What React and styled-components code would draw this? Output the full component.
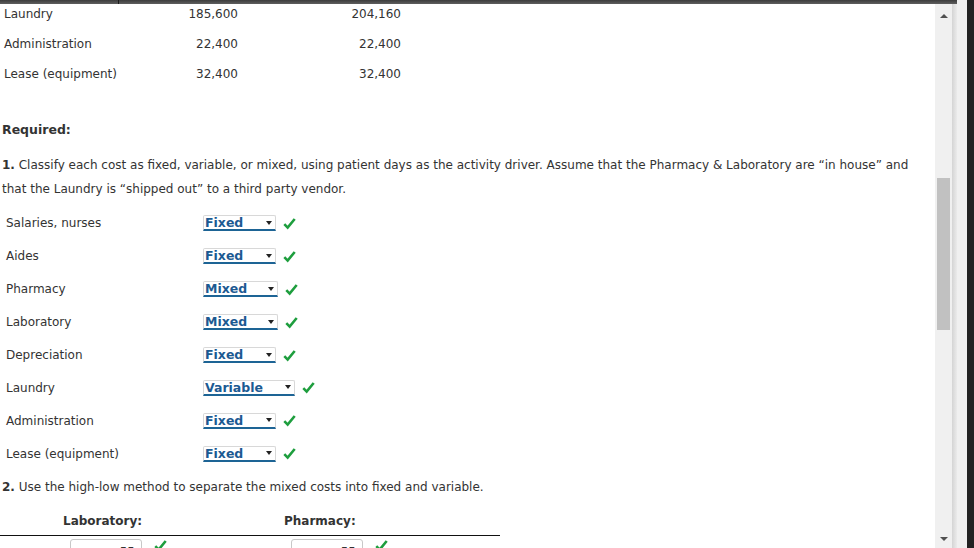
import React from 'react';
import styled, { createGlobalStyle } from 'styled-components';

const GlobalStyle = createGlobalStyle`
  html, body {
    margin: 0;
    padding: 0;
    background: #ffffff;
    overflow: hidden;
  }
  body {
    font-family: "DejaVu Sans", Verdana, sans-serif;
    color: #333333;
  }
`;

const Window = styled.div`
  display: flex;
  width: 974px;
  height: 548px;
  overflow: hidden;
`;

const MainColumn = styled.div`
  display: flex;
  flex-direction: column;
  width: 957px;
  height: 548px;
`;

const TopBand = styled.div`
  height: 4px;
  flex-shrink: 0;
  background: linear-gradient(#3c3c3c, #5e5e5e);
  display: flex;
`;

const BandTick = styled.div`
  margin-left: 118px;
  width: 1px;
  background: #1c1c1c;
`;

const Body = styled.div`
  display: flex;
  flex: 1;
  min-height: 0;
`;

const Content = styled.div`
  width: 935px;
  overflow: hidden;
  font-size: 12px;
`;

const Scrollbar = styled.div`
  width: 17px;
  background: #f0f0f0;
  display: flex;
  flex-direction: column;
  align-items: center;
  justify-content: space-between;
  padding: 10px 0 7px;
  box-sizing: border-box;
  position: relative;
`;

const Thumb = styled.div`
  position: absolute;
  top: 174px;
  left: 2px;
  width: 13px;
  height: 152px;
  background: #c1c1c1;
`;

const Arrow = styled.div`
  width: 0;
  height: 0;
  border-left: 4px solid transparent;
  border-right: 4px solid transparent;
  ${({ down }) => down ? 'border-top: 4px solid #505050;' : 'border-bottom: 4px solid #505050;'}
`;

const Shadow = styled.div`
  width: 5px;
  background: linear-gradient(90deg, #d4d4d4, #ebebeb);
`;

const Gutter = styled.div`
  width: 10px;
  background: #f0f0f0;
`;

const DarkEdge = styled.div`
  width: 7px;
  background: #222222;
`;

const DataTable = styled.div`
  margin-top: -5px;
`;

const DataRow = styled.div`
  display: grid;
  grid-template-columns: 120px 114px 163px;
  height: 30px;
  line-height: 30px;
  padding-left: 4px;
`;

const Num = styled.span`
  text-align: right;
`;

const Required = styled.div`
  font-weight: bold;
  font-size: 12.5px;
  line-height: 20px;
  margin: 31px 0 0 2px;
`;

const Para = styled.p`
  margin: ${({ mt }) => mt}px 0 0 2px;
  line-height: 24px;
  width: 925px;
`;

const CostList = styled.div`
  margin-top: 6px;
`;

const CostRow = styled.div`
  display: flex;
  align-items: center;
  height: 32.9px;
  padding-left: 6px;
`;

const CostLabel = styled.span`
  width: 197px;
`;

const SelectBox = styled.div`
  display: flex;
  align-items: center;
  justify-content: space-between;
  width: ${({ w }) => w}px;
  height: 16px;
  box-sizing: border-box;
  border: 1px solid #d8d8d8;
  border-bottom: 2px solid #1d6495;
  border-radius: 2px 2px 0 0;
  padding: 0 3px 0 1px;
  background: #ffffff;
  color: #1c5a92;
  font-weight: bold;
  font-size: 12.5px;
  line-height: 13px;
`;

const Caret = styled.span`
  width: 0;
  height: 0;
  border-left: 3.5px solid transparent;
  border-right: 3.5px solid transparent;
  border-top: 4px solid #222222;
`;

const Check = styled.svg`
  width: 13px;
  height: 13px;
  margin-left: ${({ ml }) => ml}px;
  flex-shrink: 0;
`;

const Header = styled.div`
  display: grid;
  grid-template-columns: 284px 216px;
  width: 500px;
  height: 28px;
  box-sizing: border-box;
  margin-top: 9px;
  padding: 3px 0 0 0;
  border-bottom: 1px solid #111111;
  font-weight: bold;
  line-height: 20px;
`;

const HeadCell = styled.span`
  padding-left: ${({ pl }) => pl}px;
`;

const AnswerRow = styled.div`
  display: flex;
  align-items: flex-start;
  padding: 3px 0 0 4px;
  height: 30px;
  line-height: 20px;
`;

const Small = styled.span`
  width: ${({ w }) => w}px;
  margin-left: ${({ ml }) => ml}px;
  margin-top: 6px;
`;

const InputBox = styled.div`
  width: 72px;
  height: 22px;
  box-sizing: border-box;
  border: 1px solid #c8c8c8;
  border-radius: 3px;
  text-align: right;
  padding: 2px 6px 0 0;
  color: #333333;
`;

const CheckIcon = ({ ml = 7 }) => (
  <Check viewBox="0 0 12 12" ml={ml}>
    <path d="M1.2 6.6 L4.3 9.8 L10.8 1.8" fill="none" stroke="#1e9e3e" strokeWidth="2.4" />
  </Check>
);

const dataRows = [
  ['Laundry', '185,600', '204,160'],
  ['Administration', '22,400', '22,400'],
  ['Lease (equipment)', '32,400', '32,400'],
];

const costs = [
  ['Salaries, nurses', 'Fixed', 73],
  ['Aides', 'Fixed', 73],
  ['Pharmacy', 'Mixed', 75],
  ['Laboratory', 'Mixed', 75],
  ['Depreciation', 'Fixed', 73],
  ['Laundry', 'Variable', 92],
  ['Administration', 'Fixed', 73],
  ['Lease (equipment)', 'Fixed', 73],
];

export default function App() {
  return (
    <>
      <GlobalStyle />
      <Window>
        <MainColumn>
          <TopBand><BandTick /></TopBand>
          <Body>
            <Content>
              <DataTable>
                {dataRows.map(([label, a, b]) => (
                  <DataRow key={label}>
                    <span>{label}</span>
                    <Num>{a}</Num>
                    <Num>{b}</Num>
                  </DataRow>
                ))}
              </DataTable>
              <Required>Required:</Required>
              <Para mt={13}>
                <b>1.</b> Classify each cost as fixed, variable, or mixed, using patient days as the activity driver. Assume that the Pharmacy &amp; Laboratory are “in house” and that the Laundry is “shipped out” to a third party vendor.
              </Para>
              <CostList>
                {costs.map(([label, value, w]) => (
                  <CostRow key={label}>
                    <CostLabel>{label}</CostLabel>
                    <SelectBox w={w}>
                      <span>{value}</span>
                      <Caret />
                    </SelectBox>
                    <CheckIcon />
                  </CostRow>
                ))}
              </CostList>
              <Para mt={5}>
                <b>2.</b> Use the high-low method to separate the mixed costs into fixed and variable.
              </Para>
              <Header>
                <HeadCell pl={63}>Laboratory:</HeadCell>
                <HeadCell pl={0}>Pharmacy:</HeadCell>
              </Header>
              <AnswerRow>
                <Small w={66} ml={0}>Variable rate</Small>
                <InputBox>55</InputBox>
                <CheckIcon ml={12} />
                <Small w={97} ml={27}>per patient day</Small>
                <InputBox>55</InputBox>
                <CheckIcon ml={12} />
                <Small w={100} ml={27}>per patient day</Small>
              </AnswerRow>
            </Content>
            <Scrollbar>
              <Arrow />
              <Thumb />
              <Arrow down />
            </Scrollbar>
            <Shadow />
          </Body>
        </MainColumn>
        <Gutter />
        <DarkEdge />
      </Window>
    </>
  );
}
